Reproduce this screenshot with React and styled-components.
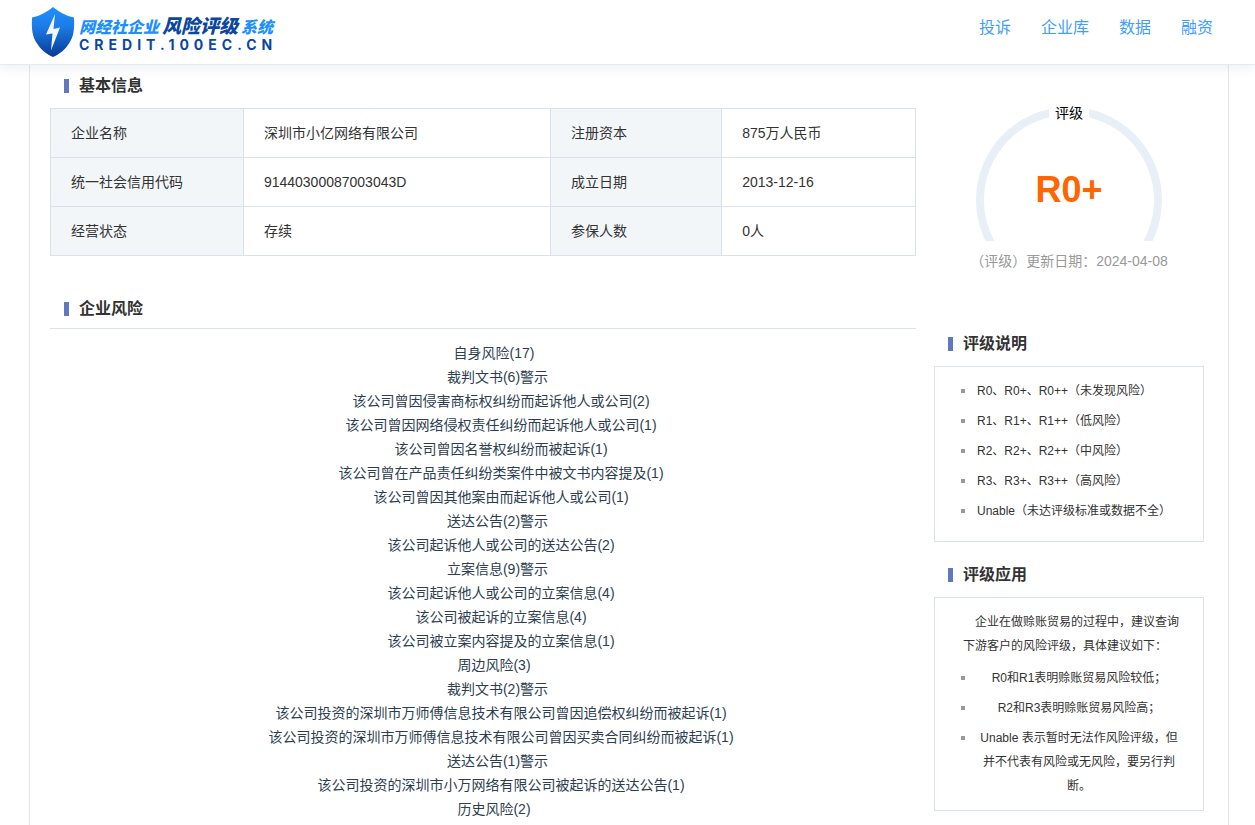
import styled, { createGlobalStyle } from 'styled-components';

const navItems = ['投诉', '企业库', '数据', '融资'];

const basicInfo = [
	['企业名称', '深圳市小亿网络有限公司', '注册资本', '875万人民币'],
	['统一社会信用代码', '91440300087003043D', '成立日期', '2013-12-16'],
	['经营状态', '存续', '参保人数', '0人'],
];

const risks = [
	{ level: 0, text: '自身风险(17)' },
	{ level: 1, text: '裁判文书(6)警示' },
	{ level: 2, text: '该公司曾因侵害商标权纠纷而起诉他人或公司(2)' },
	{ level: 2, text: '该公司曾因网络侵权责任纠纷而起诉他人或公司(1)' },
	{ level: 2, text: '该公司曾因名誉权纠纷而被起诉(1)' },
	{ level: 2, text: '该公司曾在产品责任纠纷类案件中被文书内容提及(1)' },
	{ level: 2, text: '该公司曾因其他案由而起诉他人或公司(1)' },
	{ level: 1, text: '送达公告(2)警示' },
	{ level: 2, text: '该公司起诉他人或公司的送达公告(2)' },
	{ level: 1, text: '立案信息(9)警示' },
	{ level: 2, text: '该公司起诉他人或公司的立案信息(4)' },
	{ level: 2, text: '该公司被起诉的立案信息(4)' },
	{ level: 2, text: '该公司被立案内容提及的立案信息(1)' },
	{ level: 0, text: '周边风险(3)' },
	{ level: 1, text: '裁判文书(2)警示' },
	{ level: 2, text: '该公司投资的深圳市万师傅信息技术有限公司曾因追偿权纠纷而被起诉(1)' },
	{ level: 2, text: '该公司投资的深圳市万师傅信息技术有限公司曾因买卖合同纠纷而被起诉(1)' },
	{ level: 1, text: '送达公告(1)警示' },
	{ level: 2, text: '该公司投资的深圳市小万网络有限公司被起诉的送达公告(1)' },
	{ level: 0, text: '历史风险(2)' },
];

const ratingNotes = [
	'R0、R0+、R0++（未发现风险）',
	'R1、R1+、R1++（低风险）',
	'R2、R2+、R2++（中风险）',
	'R3、R3+、R3++（高风险）',
	'Unable（未达评级标准或数据不全）',
];

const ratingUsage = [
	'R0和R1表明赊账贸易风险较低；',
	'R2和R3表明赊账贸易风险高；',
	'Unable 表示暂时无法作风险评级，但并不代表有风险或无风险，要另行判断。',
];

function ShieldLogo() {
	return (
		<svg width="44" height="50" viewBox="0 0 44 50" aria-hidden="true">
			<defs>
				<linearGradient id="shield" x1="0" y1="0" x2="0" y2="1">
					<stop offset="0" stopColor="#1e90ff" />
					<stop offset="0.4" stopColor="#1b7be6" />
					<stop offset="1" stopColor="#073b93" />
				</linearGradient>
			</defs>
			<path
				d="M22 0C16 5 9 9 1 10.500C0.500 22 1 29 6 36.500C10 43 16 47.500 22 50C28 47.500 34 43 38 36.500C43 29 43.500 22 43 10.500C35 9 28 5 22 0Z"
				fill="url(#shield)"
			/>
			<path d="M24 7L15 27.500L21.500 26.500L20 43.500L29 20.500L22.500 22Z" fill="#f2f5fb" />
		</svg>
	);
}

function Gauge() {
	return (
		<svg width="186" height="134" viewBox="0 0 186 134" aria-hidden="true">
			<circle cx="93" cy="93" r="89" fill="none" stroke="#e9eff6" strokeWidth="8" />
		</svg>
	);
}

function App() {
	return (
		<>
			<GlobalStyle />
			<Header>
				<Logo href="#">
					<ShieldLogo />
					<LogoText>
						<LogoName>
							网经社企业<strong>风险评级</strong>系统
						</LogoName>
						<LogoDomain>CREDIT.100EC.CN</LogoDomain>
					</LogoText>
				</Logo>
				<Nav>
					{navItems.map((item) => (
						<NavLink key={item} href="#">
							{item}
						</NavLink>
					))}
				</Nav>
			</Header>

			<Content>
				<MainColumn>
					<Title>基本信息</Title>
					<InfoTable>
						<colgroup>
							<col width="22.3%" />
							<col width="35.5%" />
							<col width="19.8%" />
							<col width="22.4%" />
						</colgroup>
						<tbody>
							{basicInfo.map(([label, value, label2, value2]) => (
								<tr key={label}>
									<th scope="row">{label}</th>
									<td>{value}</td>
									<th scope="row">{label2}</th>
									<td>{value2}</td>
								</tr>
							))}
						</tbody>
					</InfoTable>

					<RiskSection>
						<Title $underline>企业风险</Title>
						<RiskList>
							{risks.map((risk, idx) => (
								<RiskItem key={idx} $level={risk.level}>
									{risk.text}
								</RiskItem>
							))}
						</RiskList>
					</RiskSection>
				</MainColumn>

				<SideColumn>
					<Rating>
						<GaugeWrapper>
							<Gauge />
							<GaugeLabel>评级</GaugeLabel>
							<Score>R0+</Score>
						</GaugeWrapper>
						<UpdateDate>（评级）更新日期：2024-04-08</UpdateDate>
					</Rating>

					<Title>评级说明</Title>
					<Panel $roomy>
						<ul>
							{ratingNotes.map((note) => (
								<PanelItem key={note}>
									<span>{note}</span>
								</PanelItem>
							))}
						</ul>
					</Panel>

					<Title>评级应用</Title>
					<Panel>
						<p>企业在做赊账贸易的过程中，建议查询下游客户的风险评级，具体建议如下：</p>
						<ul>
							{ratingUsage.map((usage) => (
								<PanelItem key={usage} $center>
									<span>{usage}</span>
								</PanelItem>
							))}
						</ul>
					</Panel>
				</SideColumn>
			</Content>
		</>
	);
}

export default App;

const GlobalStyle = createGlobalStyle`
	* {
		box-sizing: border-box;
		margin: 0;
		padding: 0;
	}

	body {
		background: #fff;
		color: #333;
		font-family: 'Liberation Sans', 'Noto Sans CJK SC', sans-serif;
		font-size: 14px;
		line-height: 24px;
	}

	ul {
		list-style: none;
	}

	a {
		text-decoration: none;
	}
`;

const Header = styled.header`
	position: sticky;
	top: 0;
	z-index: 10;
	display: flex;
	justify-content: space-between;
	align-items: flex-start;
	height: 64px;
	padding: 7px 42px 0 31px;
	background: #fff;
	box-shadow:
		0 1px 0 #e6e9ed,
		0 2px 12px rgba(60, 80, 120, 0.12);
`;

const Logo = styled.a`
	display: flex;
	gap: 4px;
`;

const LogoText = styled.div`
	display: flex;
	flex-direction: column;
	gap: 1px;
	padding-top: 7px;
`;

const LogoName = styled.div`
	color: #1e8fff;
	font-family: 'Noto Sans CJK SC', sans-serif;
	font-size: 16px;
	font-style: italic;
	font-weight: 900;
	line-height: 22px;
	white-space: nowrap;

	strong {
		margin: 0 3px;
		color: #0b479f;
		font-size: 19px;
		font-weight: 900;
	}
`;

const LogoDomain = styled.div`
	color: #0b479f;
	font-family: Inter, sans-serif;
	font-size: 14px;
	font-weight: 700;
	letter-spacing: 5px;
	line-height: 14px;
`;

const Nav = styled.nav`
	display: flex;
	gap: 30px;
	padding-top: 9px;
`;

const NavLink = styled.a`
	color: #409eff;
	font-size: 16px;
`;

const Content = styled.main`
	display: grid;
	grid-template-columns: minmax(0, 1fr) 270px;
	gap: 18px;
	min-height: calc(100vh - 64px);
	margin: 0 26px 0 29px;
	padding: 0 24px 0 20px;
	border: solid #e4e7ec;
	border-width: 0 1px;
`;

const MainColumn = styled.section`
	min-width: 0;
`;

const SideColumn = styled.aside`
	padding-top: 43px;
`;

const Title = styled.h2`
	display: flex;
	align-items: center;
	gap: 10px;
	height: 42px;
	margin-bottom: ${({ $underline }) => ($underline ? '12px' : '2px')};
	padding: 2px 0 0 14px;
	border-bottom: ${({ $underline }) => ($underline ? '1px solid #dae2ea' : 'none')};
	font-size: 16px;
	font-weight: 700;

	&::before {
		content: '';
		width: 5px;
		height: 14px;
		background: #6178c0;
	}
`;

const InfoTable = styled.table`
	width: 100%;
	border-collapse: collapse;
	table-layout: fixed;

	th,
	td {
		height: 49px;
		padding: 0 20px;
		border: 1px solid #d9e2ec;
		font-weight: 400;
		text-align: left;
	}

	th {
		background: #f2f6f9;
	}
`;

const RiskSection = styled.section`
	margin-top: 31px;
`;

const RiskList = styled.ul`
	padding-left: 22px;
	color: #2c3e50;
	text-align: center;
`;

const RiskItem = styled.li`
	padding-left: ${({ $level }) => $level * 7}px;
`;

const Rating = styled.div`
	display: flex;
	flex-direction: column;
	align-items: center;
	gap: 8px;
	margin-bottom: 49px;
`;

const GaugeWrapper = styled.div`
	position: relative;
	display: flex;
`;

const GaugeLabel = styled.span`
	position: absolute;
	top: -6px;
	left: 50%;
	width: 40px;
	transform: translateX(-50%);
	background: #fff;
	color: #000;
	text-align: center;
`;

const Score = styled.strong`
	position: absolute;
	top: 63px;
	left: 0;
	width: 100%;
	color: #ff6600;
	font-size: 36px;
	line-height: 40px;
	text-align: center;
`;

const UpdateDate = styled.p`
	color: #999;
	white-space: nowrap;
`;

const Panel = styled.div`
	margin-bottom: 11px;
	padding: 9px 22px ${({ $roomy }) => ($roomy ? '15px' : '9px')} 26px;
	border: 1px solid #dae2ea;
	font-size: 12px;

	p {
		padding: 3px 0 5px 2px;
		text-indent: 12px;
	}
`;

const PanelItem = styled.li`
	display: flex;
	gap: 12px;
	padding: 3px 0;

	&::before {
		content: '';
		flex: none;
		width: 4px;
		height: 4px;
		margin-top: 10px;
		background: #999;
	}

	span {
		flex: 1;
		text-align: ${({ $center }) => ($center ? 'center' : 'left')};
	}
`;
